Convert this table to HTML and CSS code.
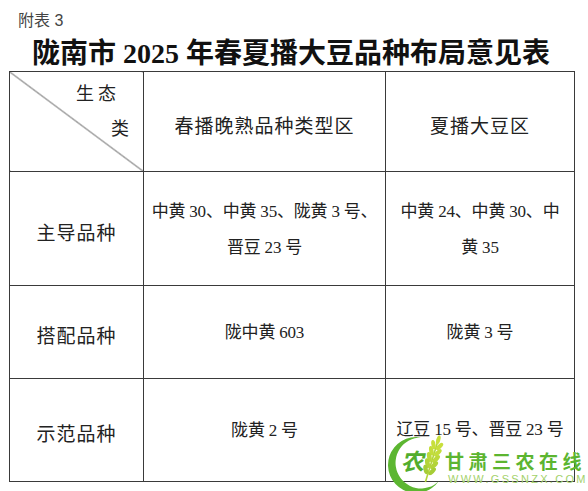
FILE: index.html
```html
<!DOCTYPE html>
<html lang="zh-CN">
<head>
<meta charset="utf-8">
<title>陇南市2025年春夏播大豆品种布局意见表</title>
<link rel="stylesheet" href="styles.css">
</head>
<body>
<div class="page">
  <p class="note">附表 3</p>
  <h1 class="title">陇南市 2025 年春夏播大豆品种布局意见表</h1>
  <table class="grid">
    <colgroup>
      <col class="c-a"><col class="c-b"><col class="c-c">
    </colgroup>
    <tr class="r-head">
      <td class="corner">
        <span class="corner-top">生 态</span>
        <span class="corner-bottom">类</span>
      </td>
      <td class="head">春播晚熟品种类型区</td>
      <td class="head">夏播大豆区</td>
    </tr>
    <tr class="r-main">
      <td class="label">主导品种</td>
      <td class="cell">中黄 30、中黄 35、陇黄 3 号、<br>晋豆 23 号</td>
      <td class="cell">中黄 24、中黄 30、中<br>黄 35</td>
    </tr>
    <tr class="r-mix">
      <td class="label">搭配品种</td>
      <td class="cell">陇中黄 603</td>
      <td class="cell">陇黄 3 号</td>
    </tr>
    <tr class="r-demo">
      <td class="label">示范品种</td>
      <td class="cell">陇黄 2 号</td>
      <td class="cell up">辽豆 15 号、晋豆 23 号</td>
    </tr>
  </table>
</div>

<div class="watermark">
  <svg class="wm-logo" width="70" height="60" viewBox="0 0 70 60">
    <path d="M36.9 5.4 A28 28 0 1 0 54.9 49.1 A25.5 25.5 0 1 1 36.9 5.4 Z" fill="#5cb631"/>
    <g transform="rotate(17 42 48)">
      <path d="M42 50 L42 6" stroke="#b3d43a" stroke-width="1.6" fill="none"/>
      <ellipse cx="42" cy="6" rx="2" ry="4.5" fill="#c8df3c"/>
      <ellipse cx="38.8" cy="12" rx="2.1" ry="4.6" transform="rotate(-28 38.8 12)" fill="#c8df3c"/>
      <ellipse cx="45.2" cy="12" rx="2.1" ry="4.6" transform="rotate(28 45.2 12)" fill="#c8df3c"/>
      <ellipse cx="38.6" cy="18.5" rx="2.2" ry="4.8" transform="rotate(-28 38.6 18.5)" fill="#c4dd3b"/>
      <ellipse cx="45.4" cy="18.5" rx="2.2" ry="4.8" transform="rotate(28 45.4 18.5)" fill="#c4dd3b"/>
      <ellipse cx="38.5" cy="25" rx="2.3" ry="5" transform="rotate(-28 38.5 25)" fill="#bcd93a"/>
      <ellipse cx="45.5" cy="25" rx="2.3" ry="5" transform="rotate(28 45.5 25)" fill="#bcd93a"/>
      <ellipse cx="38.5" cy="31.5" rx="2.3" ry="5" transform="rotate(-28 38.5 31.5)" fill="#b3d438"/>
      <ellipse cx="45.5" cy="31.5" rx="2.3" ry="5" transform="rotate(28 45.5 31.5)" fill="#b3d438"/>
      <ellipse cx="38.6" cy="38" rx="2.2" ry="4.8" transform="rotate(-28 38.6 38)" fill="#a6cd36"/>
      <ellipse cx="45.4" cy="38" rx="2.2" ry="4.8" transform="rotate(28 45.4 38)" fill="#a6cd36"/>
    </g>
    <text x="18" y="38" class="wm-glyph" transform="skewX(-12) translate(7 0)">农</text>
  </svg>
  <div class="wm-name">甘肃三农在线</div>
  <div class="wm-url">WWW.GSSNZX.COM</div>
</div>
</body>
</html>
```

FILE: styles.css
```css
html, body {
  margin: 0;
  padding: 0;
  background: #ffffff;
  overflow: hidden;
}

body {
  width: 588px;
  height: 491px;
  position: relative;
  font-family: "Liberation Serif", "Noto Sans CJK SC", serif;
  color: #222;
}

.page {
  padding-left: 9px;
}

.note {
  margin: 0;
  padding: 11px 0 0 9px;
  height: 20px;
  line-height: 20px;
  font-family: "Liberation Sans", "Noto Sans CJK SC", sans-serif;
  font-size: 16px;
  color: #444;
}

.title {
  margin: 0;
  height: 35px;
  padding-top: 5px;
  line-height: 36px;
  padding-left: 23px;
  font-family: "Liberation Serif", "Noto Sans CJK SC", serif;
  font-weight: 700;
  font-size: 28px;
  color: #111;
  white-space: nowrap;
}

.grid {
  border-collapse: collapse;
  table-layout: fixed;
  width: 565px;
}

.c-a { width: 134px; }
.c-b { width: 242px; }
.c-c { width: 189px; }

.grid td {
  border: 1px solid #3a3a3a;
  padding: 0;
  text-align: center;
  vertical-align: middle;
  font-family: "Liberation Serif", "Noto Sans CJK SC", serif;
  font-size: 17px;
  line-height: 36px;
  color: #222;
  white-space: nowrap;
}

.r-head { height: 100px; }
.r-main { height: 114px; }
.r-mix { height: 93px; }
.r-demo { height: 103px; }

.grid td.head,
.grid td.label {
  font-family: "Noto Sans CJK SC", sans-serif;
  font-size: 19px;
  letter-spacing: 1px;
}

.grid td.head { padding-top: 6px; }
.grid td.label { padding-top: 6px; }
.grid td.cell { padding-top: 2px; letter-spacing: -0.2px; }
.grid td.up { padding-top: 0; }

.grid td.corner {
  vertical-align: top;
  padding: 3px 0 0 0;
  background: linear-gradient(to top right, transparent calc(50% - 0.7px), #3a3a3a 50%, transparent calc(50% + 0.7px));
  font-family: "Noto Sans CJK SC", sans-serif;
  font-size: 18px;
  line-height: 35px;
}

.corner-top,
.corner-bottom {
  display: block;
  text-align: right;
}

.corner-top { padding-right: 27px; }
.corner-bottom { padding-right: 14px; }

.watermark {
  position: absolute;
  left: 384px;
  top: 432px;
  width: 204px;
  height: 59px;
  pointer-events: none;
}

.wm-logo {
  position: absolute;
  left: 0;
  top: 0;
  overflow: visible;
}

.wm-glyph {
  font-family: "Noto Sans CJK SC", sans-serif;
  font-weight: 700;
  font-size: 23px;
  fill: #52ad2d;
}

.wm-name {
  position: absolute;
  left: 61px;
  top: 19px;
  font-family: "Noto Sans CJK SC", sans-serif;
  font-weight: 700;
  font-size: 19px;
  line-height: 20px;
  letter-spacing: 4.5px;
  color: #5cb530;
  white-space: nowrap;
}

.wm-url {
  position: absolute;
  left: 64px;
  top: 42px;
  font-family: "Liberation Sans", sans-serif;
  font-size: 11px;
  line-height: 11px;
  letter-spacing: 2.3px;
  color: #a3d16a;
  white-space: nowrap;
}
```
